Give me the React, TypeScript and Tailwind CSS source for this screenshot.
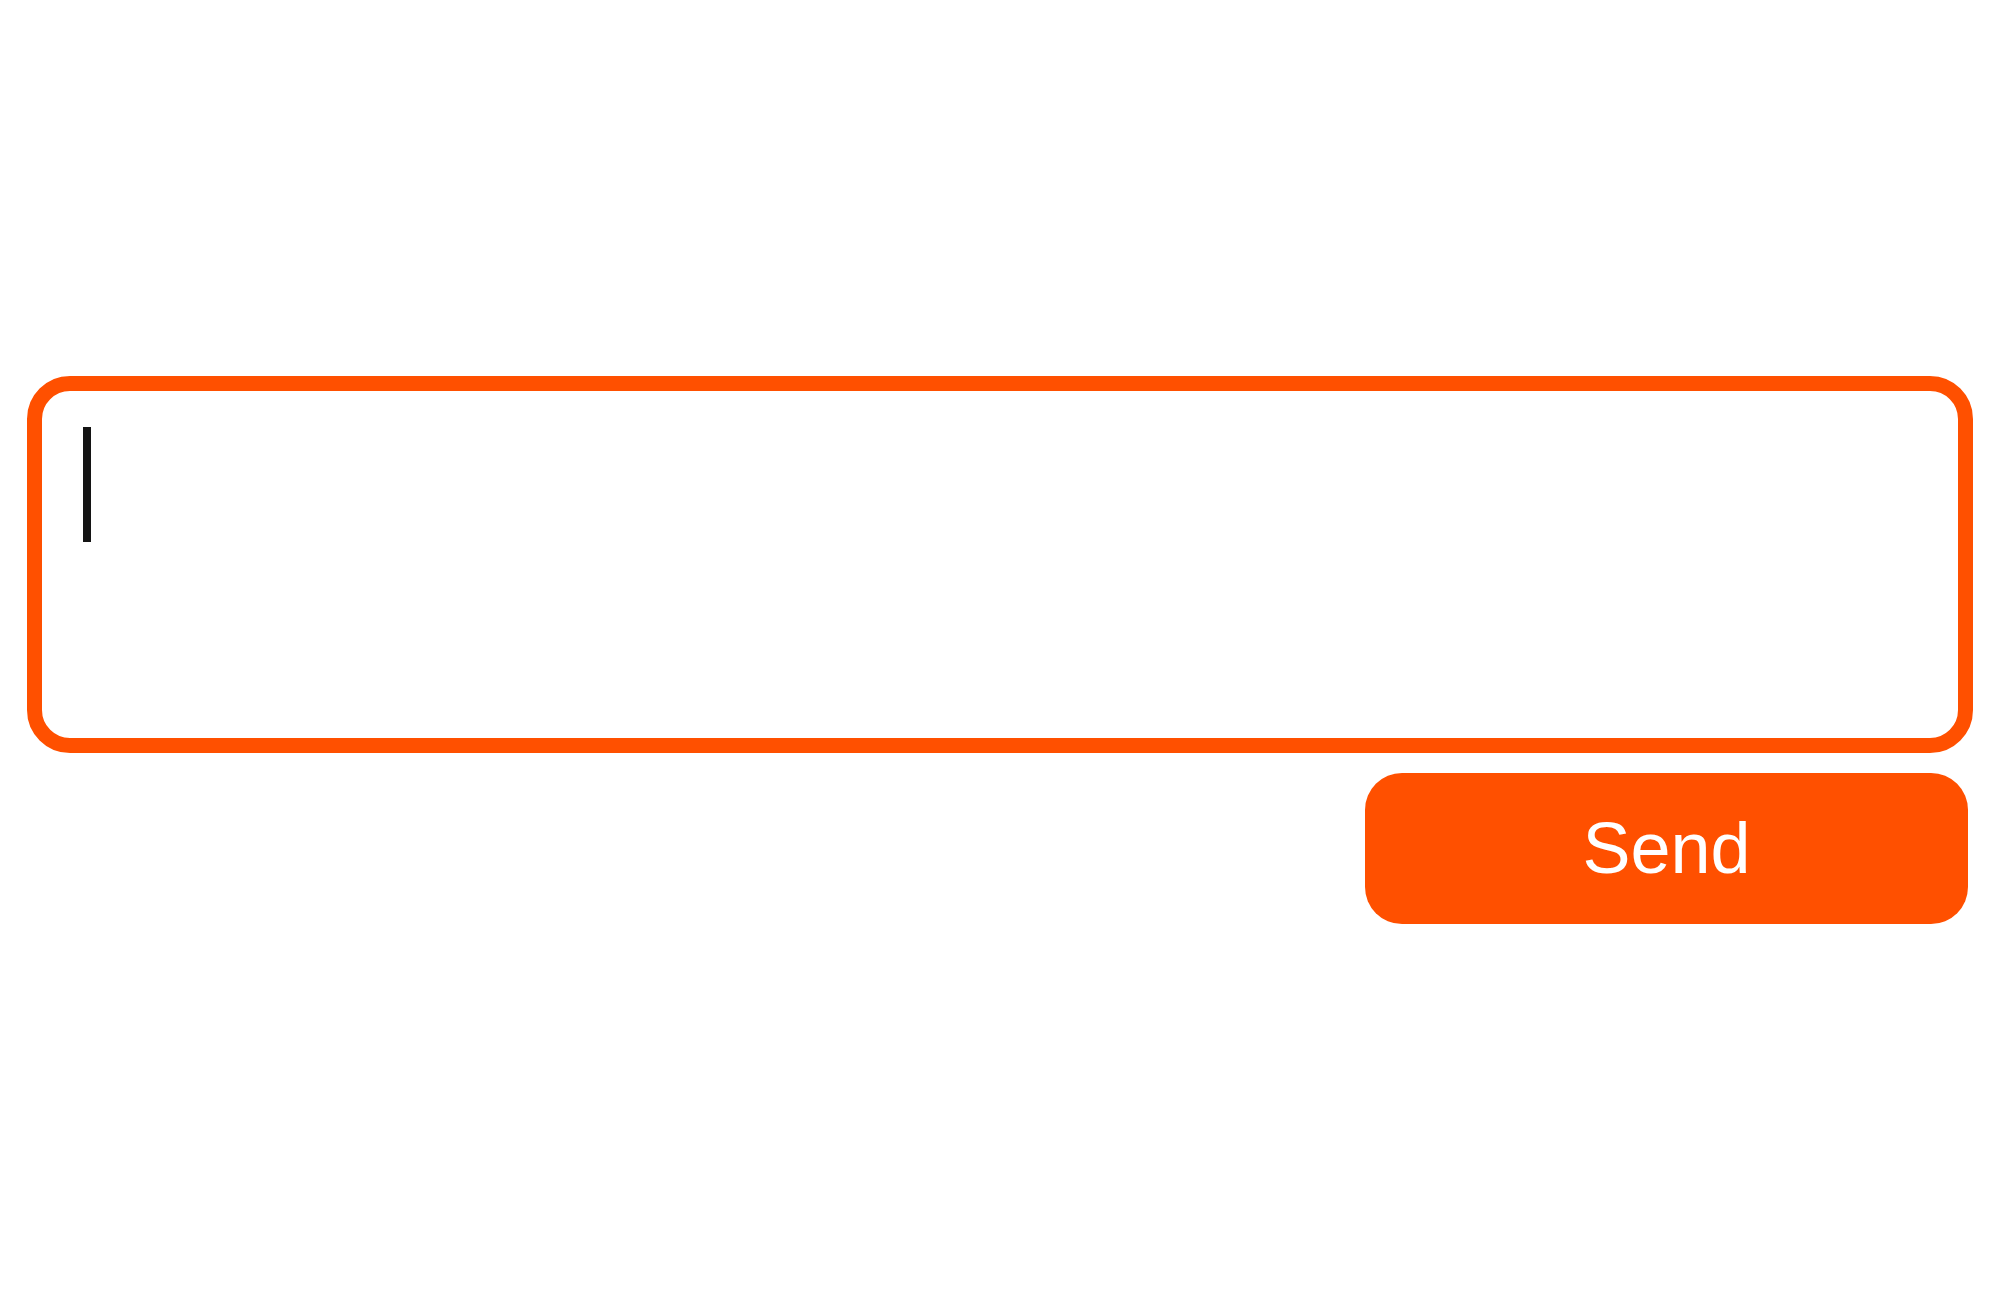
export default function App() {
  return (
    <div className="min-h-screen w-full bg-white flex items-center justify-center">
      <div className="w-full px-[27px] flex flex-col items-end gap-[20px]">
        <div className="w-full h-[377px] border-[15px] border-[#ff5000] rounded-[43px] pl-[41px] pt-[36px] bg-white">
          <div className="w-[8px] h-[115px] bg-[#141414]" />
        </div>
        <button
          type="button"
          className="w-[603px] h-[151px] mr-[5px] rounded-[37px] bg-[#ff5000] text-white text-[72px] pb-[2px] flex items-center justify-center"
          style={{ fontFamily: '"Liberation Sans", Arial, sans-serif' }}
        >
          Send
        </button>
      </div>
    </div>
  );
}
